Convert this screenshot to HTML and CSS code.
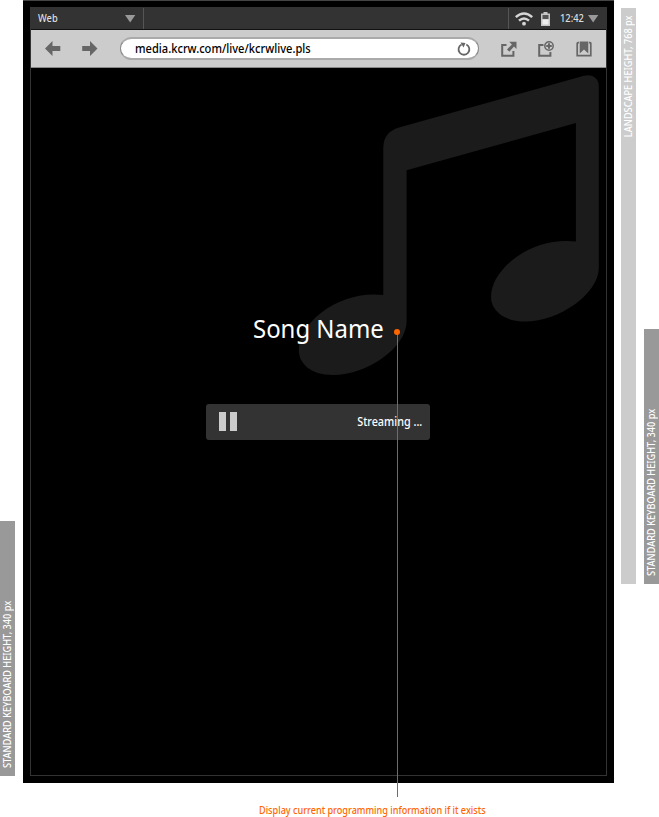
FILE: index.html
```
<!DOCTYPE html>
<html lang="en">
<head>
<meta charset="utf-8">
<title>Streaming audio</title>
<link rel="stylesheet" href="styles.css">
</head>
<body>
<div class="board">
  <aside class="rail rail-left"><span>STANDARD KEYBOARD HEIGHT, 340 px</span></aside>
  <main class="device">
    <div class="screen">
      <header class="status">
        <div class="app-menu"><span class="label">Web</span><i class="caret"></i></div>
        <div class="system">
          <svg class="wifi" width="18" height="14" viewBox="0 0 18 14" fill="none" stroke="#d6d6d6" stroke-width="2.4"><path d="M.8 5.2Q9-2.4 17.2 5.2"/><path d="M4 8.7Q9 4.2 14 8.7"/><circle cx="9" cy="11.700" r="1.900" fill="#d6d6d6" stroke="none"/></svg>
          <svg class="battery" width="9" height="14" viewBox="0 0 9 14"><path d="M2.5 0h4v1.500H9V14H0V1.500h2.500z" fill="#c6c6c6"/><path d="M1.500 3h6v4h-6z" fill="#555"/><path d="M1.500 7.500h6v5h-6z" fill="#eee"/></svg>
          <span class="label clock">12:42</span><i class="caret"></i>
        </div>
      </header>
      <nav class="toolbar">
        <svg class="arrow" width="16" height="15" viewBox="0 0 16 15"><path d="M0 7.5 7.5 0v5H15.3v5H7.5v5z" fill="#666"/></svg>
        <svg class="arrow" width="16" height="15" viewBox="0 0 16 15"><path d="M15.5 7.5 8 0v5H.2v5H8v5z" fill="#666"/></svg>
        <div class="address">
          <span class="url">media.kcrw.com/live/kcrwlive.pls</span>
          <svg width="14" height="14" viewBox="0 0 14 14"><path d="M9.300 2.500A5.400 5.400 0 1 1 4.600 2.500" fill="none" stroke="#666" stroke-width="1.800"/><path d="M3.500.5 8.500 1 6.500 5.500z" fill="#666"/></svg>
        </div>
        <svg class="tool" width="16" height="16" viewBox="0 0 16 16"><path d="M5.500 4H1.200v10.700h11.200V10" fill="none" stroke="#666" stroke-width="2"/><path d="M8.200.8H15.500V8L13 5.500 8.300 10.700 6 8.400 10.900 3.400z" fill="#666"/></svg>
        <svg class="tool" width="16" height="16" viewBox="0 0 16 16"><path d="M5.500 4H1.200v10.700h11.200V11" fill="none" stroke="#666" stroke-width="2"/><circle cx="11" cy="5" r="4.200" fill="#ccc" stroke="#666" stroke-width="1.500"/><path d="M11 2.200v5.600M8.200 5h5.600" stroke="#666" stroke-width="2"/></svg>
        <svg class="tool" width="16" height="16" viewBox="0 0 16 16"><path d="M3 1.600H2Q1.200 1.600 1.200 2.500V14.700H14.800V2.500Q14.800 1.600 14 1.600H13" fill="none" stroke="#666" stroke-width="1.700"/><path d="M3.700.5h8.600v12L8 8.500 3.700 12.500z" fill="#666"/></svg>
      </nav>
      <section class="player">
        <svg class="note" width="302" height="302" viewBox="298 74 302 302"><path d="M383.3 295V147Q383.8 132 399 127.5L584 75.8C592 73.5 598.8 78 598.8 86V268C598.8 293 560 321.5 525 321.5C502 321.5 491 309 491 297C491 269 531 236.500 575.900 241.600V123L406.600 170.300V321.500C406.600 347 368 375 333 375C310 375 298.800 363 298.800 350C298.800 322.500 339 290 383.300 295Z" fill="#1b1b1b"/></svg>
        <h1 class="title">Song Name</h1>
        <div class="controls"><span class="pause"><i></i><i></i></span><span class="state">Streaming ...</span></div>
      </section>
    </div>
    <div class="callout"></div>
  </main>
  <aside class="rail rail-landscape"><span>LANDSCAPE HEIGHT, 768 px</span></aside>
  <aside class="rail rail-right"><span>STANDARD KEYBOARD HEIGHT, 340 px</span></aside>
</div>
<p class="caption"><span>Display current programming information if it exists</span></p>
</body>
</html>
```
FILE: styles.css
```
* { box-sizing: border-box; }
body { margin: 0; width: 659px; height: 817px; overflow: hidden; background: #fff; font-family: "Noto Sans", sans-serif; }
svg { display: block; flex: none; }
span, h1 { white-space: nowrap; }
.board { display: grid; grid-template-columns: 15px 591px 15px 15px; column-gap: 7.67px; height: 783px; align-items: start; }
.rail { display: flex; align-items: center; justify-content: flex-start; writing-mode: vertical-rl; width: 15px; transform: rotate(180deg); background: #999; color: #fff; font-size: 10px; font-weight: 500; line-height: 15px; padding-top: 8px; }
.rail span { transform: scaleY(.918); transform-origin: top; }
.rail-left { margin-top: 521px; height: 255px; }
.rail-right { margin-top: 329px; height: 255px; }
.rail-landscape { margin-top: 8px; height: 576px; background: #ccc; justify-content: flex-end; padding: 0 0 7px; }
.rail-landscape span { transform-origin: bottom; }
.device { position: relative; height: 783px; background: #000; border-top: 1px solid #444; padding: 6px 7px 7px; }
.screen { height: 769px; border: 1px solid #333; display: flex; flex-direction: column; }
.status { height: 22px; background: #333; border-bottom: 1px solid #111; display: flex; justify-content: space-between; color: #ddd; }
.app-menu { width: 113px; border-right: 1px solid #555; display: flex; align-items: center; justify-content: space-between; padding: 0 7px 0 7px; }
.label { font-size: 10px; font-weight: 500; line-height: 20px; transform: translateY(-1px) scaleX(.93); transform-origin: left; }
.caret { width: 11px; height: 8px; background: #999; clip-path: polygon(0 0, 100% 0, 50% 100%); }
.system { width: 98px; border-left: 1px solid #555; display: flex; align-items: center; padding-left: 6px; }
.battery { margin-left: 8px; }
.clock { width: 28px; margin: 0 0 0 10px; }
.toolbar { height: 38px; background: #ccc; border-bottom: 1px solid #888; display: flex; align-items: center; padding-left: 14px; }
.arrow { margin-right: 21.5px; }
.address { flex: none; width: 359px; height: 23px; margin-right: 22px; border: 1px solid #888; border-top: 2px solid #aaa; border-bottom: 2px solid #aaa; border-radius: 12px; background: #fff; display: flex; align-items: center; justify-content: space-between; padding: 0 7px 0 14px; }
.url { font-size: 12px; line-height: 18px; font-weight: 500; color: #000; transform: scaleX(.927); transform-origin: left; }
.tool { margin-right: 21.5px; }
.tool:last-child { margin-right: 0; }
.player { position: relative; flex: 1; display: flex; flex-direction: column; align-items: flex-start; }
.note { position: absolute; left: 267px; top: 6px; }
.title { position: relative; margin: 241px 0 0 222px; font-size: 26px; line-height: 38px; font-weight: 400; color: #fff; transform: scaleX(.92); transform-origin: left; }
.controls { position: relative; margin: 57px 0 0 175px; width: 224px; height: 36px; background: #333; border-radius: 3px; display: flex; align-items: center; justify-content: space-between; padding: 0 7px 0 13px; color: #fff; }
.pause { display: flex; gap: 4px; margin-top: -1px; }
.pause i { width: 7px; height: 19px; background: #ccc; }
.state { font-size: 12px; font-weight: 500; transform: translateY(-1px) scaleX(.9); transform-origin: right; }
.callout { position: absolute; left: 374px; top: 331px; width: 1px; height: 465px; background: #b9561a; }
.callout::before { content: ""; position: absolute; left: -3px; top: -3px; width: 6px; height: 6px; border-radius: 50%; background: #f60; }
.caption { margin: 20px 0 0 259px; font-size: 10px; font-weight: 500; line-height: 14px; color: #f60; }
.caption span { display: inline-block; transform: scaleX(.91); transform-origin: left; }
```
